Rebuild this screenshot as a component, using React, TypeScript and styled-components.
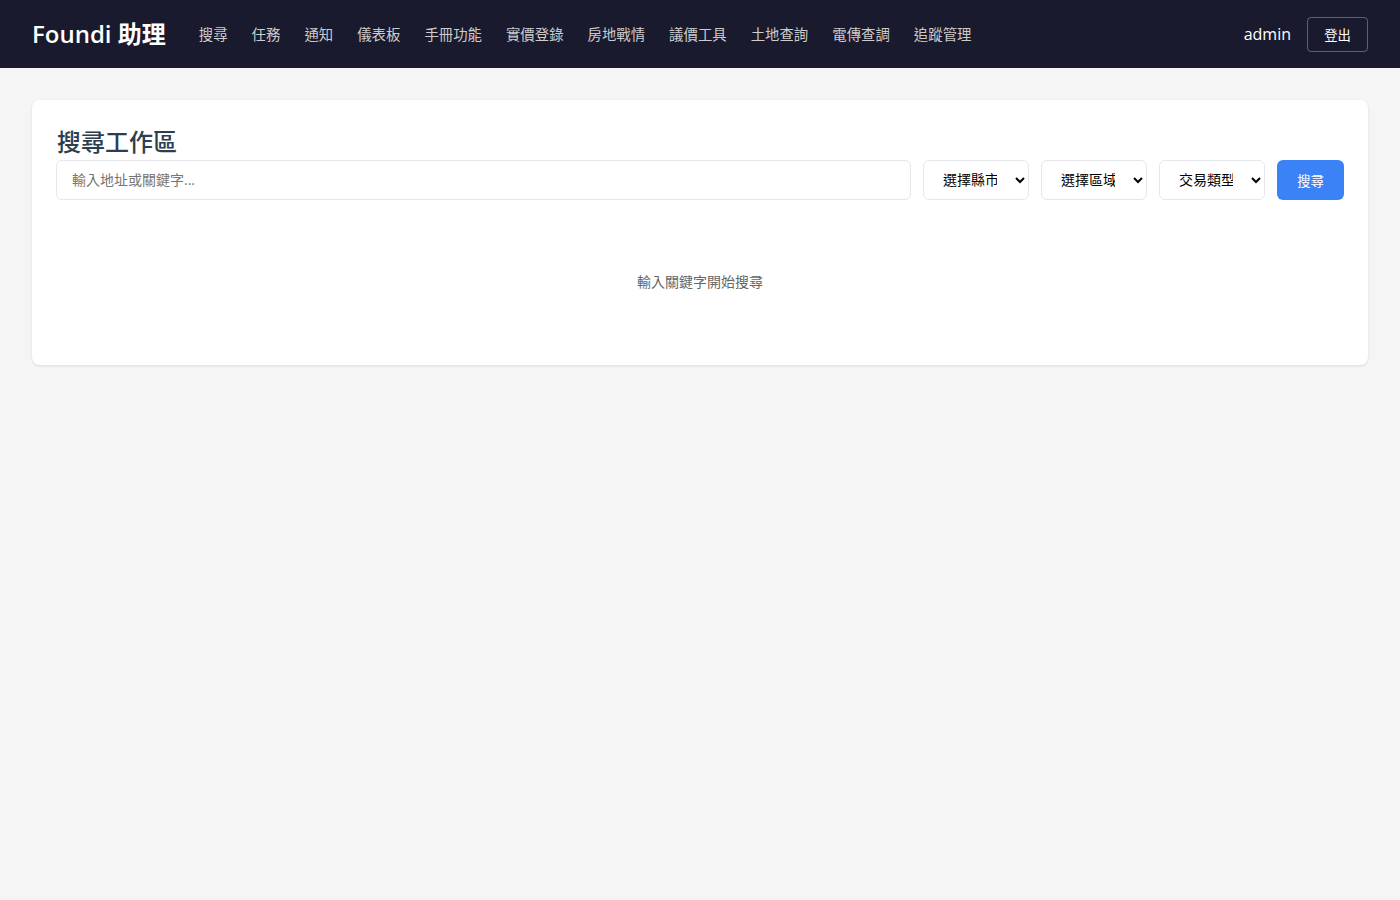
import React from 'react';
import styled, { createGlobalStyle } from 'styled-components';

const Global = createGlobalStyle`
  html, body { margin: 0; padding: 0; }
  body {
    background: #f5f5f5;
    font-family: "Open Sans", "Noto Sans CJK TC", sans-serif;
    min-height: 100vh;
  }
  * { box-sizing: border-box; }
`;

const Header = styled.header`
  height: 68px;
  background: #1a1a2e;
  color: #fff;
  display: flex;
  align-items: center;
  justify-content: space-between;
  padding: 0 32px;
`;
const HeaderLeft = styled.div`
  display: flex;
  align-items: center;
  gap: 33px;
`;
const Logo = styled.div`
  font-size: 24px;
  line-height: 32px;
  font-weight: 600;
  padding-bottom: 1px;
`;
const Nav = styled.nav`
  display: flex;
  gap: 24px;
  padding-top: 1px;
`;
const NavLink = styled.a`
  color: #ccc;
  font-size: 14.4px;
  line-height: 20px;
  text-decoration: none;
`;
const UserArea = styled.div`
  display: flex;
  align-items: center;
  gap: 16px;
`;
const UserName = styled.span`
  font-size: 16px;
`;
const LogoutButton = styled.button`
  background: transparent;
  color: #fff;
  border: 1px solid rgba(255, 255, 255, 0.3);
  border-radius: 4px;
  height: 35px;
  width: 61px;
  padding: 0;
  font-size: 13.33px;
  font-family: inherit;
`;
const Main = styled.main`
  padding: 32px;
`;
const Card = styled.section`
  background: #fff;
  border-radius: 8px;
  box-shadow: 0 1px 3px rgba(0, 0, 0, 0.1);
  padding: 24px;
  height: 265px;
`;
const Title = styled.h2`
  margin: 0;
  padding-left: 1px;
  font-size: 24px;
  line-height: 36px;
  font-weight: 500;
  color: #2c3e50;
`;
const SearchRow = styled.div`
  display: flex;
  gap: 12px;
`;
const SearchInput = styled.input`
  flex: 1;
  height: 40px;
  border: 1px solid #e5e7eb;
  border-radius: 6px;
  padding: 0 15px 2px;
  font-size: 14px;
  font-family: inherit;
  &::placeholder { color: #757575; }
`;
const Select = styled.select`
  width: 106px;
  height: 40px;
  border: 1px solid #e5e7eb;
  border-radius: 6px;
  padding: 0 15px 2px;
  background: #fff;
  color: #000;
  font-size: 14px;
  font-family: inherit;
`;
const SearchButton = styled.button`
  width: 67px;
  height: 40px;
  background: #3b82f6;
  color: #fff;
  border: none;
  border-radius: 6px;
  font-size: 13.33px;
  font-family: inherit;
  padding: 0;
`;
const Empty = styled.p`
  margin: 0;
  padding-top: 72px;
  text-align: center;
  font-size: 14px;
  line-height: 20px;
  color: #666;
`;

const links = ['搜尋','任務','通知','儀表板','手冊功能','實價登錄','房地戰情','議價工具','土地查詢','電傳查調','追蹤管理'];

export default function App() {
  return (
    <>
      <Global />
      <Header>
        <HeaderLeft>
          <Logo>Foundi 助理</Logo>
          <Nav>
            {links.map(l => <NavLink key={l} href="#">{l}</NavLink>)}
          </Nav>
        </HeaderLeft>
        <UserArea>
          <UserName>admin</UserName>
          <LogoutButton>登出</LogoutButton>
        </UserArea>
      </Header>
      <Main>
        <Card>
          <Title>搜尋工作區</Title>
          <SearchRow>
            <SearchInput placeholder="輸入地址或關鍵字..." />
            <Select><option>選擇縣市</option></Select>
            <Select><option>選擇區域</option></Select>
            <Select><option>交易類型</option></Select>
            <SearchButton>搜尋</SearchButton>
          </SearchRow>
          <Empty>輸入關鍵字開始搜尋</Empty>
        </Card>
      </Main>
    </>
  );
}
